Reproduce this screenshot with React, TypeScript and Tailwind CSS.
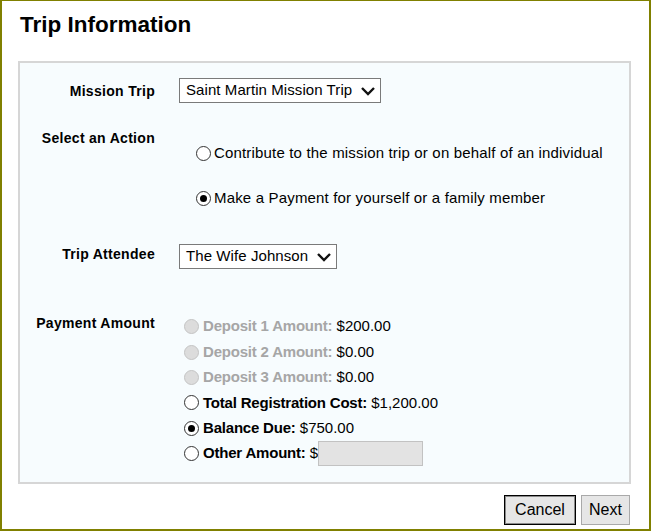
import React from "react";

const font = { fontFamily: '"Liberation Sans", Arial, sans-serif' };

function Radio({ checked = false, disabled = false }: { checked?: boolean; disabled?: boolean }) {
  return (
    <span
      className={`flex h-[15px] w-[15px] shrink-0 items-center justify-center rounded-full border ${
        disabled ? "border-[#c4c4c4] bg-[#dcdcdc]" : "border-[#333] bg-white"
      }`}
    >
      {checked && <span className="h-[7px] w-[7px] rounded-full bg-black" />}
    </span>
  );
}

function FakeSelect({ value, width }: { value: string; width: string }) {
  return (
    <div
      className={`flex h-[25px] items-center justify-between border border-[#7a7a7a] bg-white pl-[6px] pr-[4px] text-[15px] text-black ${width}`}
    >
      <span className="tracking-[0.08px]">{value}</span>
      <svg width="16" height="16" viewBox="0 0 16 16" className="shrink-0">
        <polyline points="2,5 8,11 14,5" fill="none" stroke="#111" strokeWidth="2.4" />
      </svg>
    </div>
  );
}

function Label({ children, className = "" }: { children: React.ReactNode; className?: string }) {
  return (
    <div
      className={`w-[135px] shrink-0 text-right text-[14px] font-bold leading-[18px] tracking-[0.3px] text-black ${className}`}
    >
      {children}
    </div>
  );
}

const amounts = [
  { label: "Deposit 1 Amount:", value: "$200.00", disabled: true },
  { label: "Deposit 2 Amount:", value: "$0.00", disabled: true },
  { label: "Deposit 3 Amount:", value: "$0.00", disabled: true },
  { label: "Total Registration Cost:", value: "$1,200.00" },
  { label: "Balance Due:", value: "$750.00", checked: true },
];

export default function App() {
  return (
    <div
      style={font}
      className="h-[531px] w-[651px] border-x-2 border-t border-b-2 border-[#808000] bg-white px-[16px] pt-[11px]"
    >
      <h1 className="pl-[2px] text-[22.5px] font-bold leading-[26px] text-black">Trip Information</h1>

      <div className="mt-[23px] mr-[2px] border-2 border-[#d6d6d6] bg-[#f7fcfe] pt-[15px] pb-[16px]">
        {/* Mission trip */}
        <div className="flex items-center gap-[24px]">
          <Label>Mission Trip</Label>
          <FakeSelect value="Saint Martin Mission Trip" width="w-[202px]" />
        </div>

        {/* Action */}
        <div className="mt-[27px] flex gap-[24px]">
          <Label className="-mt-[1px]">Select an Action</Label>
          <div className="flex flex-col gap-[27px] pt-[14px] pl-[17px] text-[15px] leading-[18px] tracking-[0.17px] text-black">
            <label className="flex items-center gap-[3px]">
              <Radio />
              <span>Contribute to the mission trip or on behalf of an individual</span>
            </label>
            <label className="flex items-center gap-[3px]">
              <Radio checked />
              <span>Make a Payment for yourself or a family member</span>
            </label>
          </div>
        </div>

        {/* Attendee */}
        <div className="mt-[37px] flex items-center gap-[24px]">
          <Label className="-mt-[5px]">Trip Attendee</Label>
          <FakeSelect value="The Wife Johnson" width="w-[158px]" />
        </div>

        {/* Payment amount */}
        <div className="mt-[45px] flex gap-[24px]">
          <Label>Payment Amount</Label>
          <div className="flex flex-col pl-[5px] text-[15px] text-black">
            {amounts.map((a) => (
              <div key={a.label} className="flex h-[25.4px] items-center gap-[4px]">
                <Radio checked={a.checked} disabled={a.disabled} />
                <span>
                  <b className={`tracking-[-0.2px] ${a.disabled ? "text-[#a6a6a6]" : "text-black"}`}>{a.label}</b>{" "}
                  {a.value}
                </span>
              </div>
            ))}
            <div className="flex h-[25.4px] items-center gap-[4px]">
              <Radio />
              <span>
                <b className="tracking-[-0.2px]">Other Amount:</b> $
              </span>
              <input
                disabled
                className="ml-[-4px] h-[25px] w-[105px] border border-[#c2c2c2] bg-[#e3e3e3]"
              />
            </div>
          </div>
        </div>
      </div>

      <div className="mt-[11px] mr-[3px] flex justify-end gap-[5px] text-[16px] text-black">
        <button className="h-[30px] w-[72px] border border-black bg-[#e6e6e6] shadow-[inset_0_0_0_1px_#8a8a8a]">
          Cancel
        </button>
        <button className="h-[30px] w-[49px] border border-[#a9a9a9] bg-[#e6e6e6]">Next</button>
      </div>
    </div>
  );
}
